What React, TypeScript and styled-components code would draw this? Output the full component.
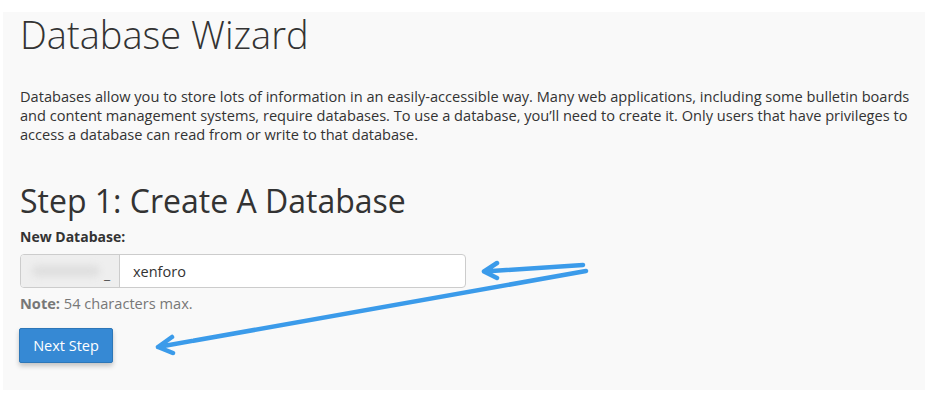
import React from "react";
import styled, { createGlobalStyle } from "styled-components";

const GlobalStyle = createGlobalStyle`
  html, body {
    margin: 0;
    padding: 0;
    background: #ffffff;
  }
  body {
    font-family: "Open Sans", "Noto Sans", sans-serif;
    color: #333333;
  }
`;

const Page = styled.div`
  padding: 12px 3px 3px 3px;
`;

const Panel = styled.div`
  position: relative;
  background: #f9f9f9;
  height: 378px;
  padding: 0 12px 0 17px;
  box-sizing: border-box;
`;

const Title = styled.h1`
  margin: 0;
  font-size: 38px;
  line-height: 44px;
  font-weight: 300;
  color: #333;
`;

const Intro = styled.p`
  margin: 31px 0 0 0;
  font-size: 14.6px;
  line-height: 19px;
  color: #333;
`;

const StepTitle = styled.h2`
  margin: 38px 0 0 0;
  font-size: 32px;
  line-height: 38px;
  font-weight: 400;
  color: #333;
`;

const Label = styled.label`
  display: block;
  margin-top: 7px;
  font-size: 14px;
  line-height: 20px;
  font-weight: 700;
  color: #333;
`;

const InputGroup = styled.div`
  display: flex;
  margin-top: 7px;
  width: 446px;
  height: 34px;
  border: 1px solid #cccccc;
  border-radius: 4px;
  box-sizing: border-box;
  overflow: hidden;
  background: #fff;
`;

const Addon = styled.div`
  display: flex;
  align-items: center;
  gap: 4px;
  width: 99px;
  flex: none;
  padding-left: 11px;
  box-sizing: border-box;
  background: #eeeeee;
  border-right: 1px solid #cccccc;
  font-size: 14px;
  color: #555;
`;

const Blurred = styled.span`
  display: inline-block;
  width: 68px;
  height: 12px;
  border-radius: 6px;
  background: #e0e0e0;
  filter: blur(3px);
`;

const Underscore = styled.span`
  padding-top: 4px;
`;

const TextInput = styled.input`
  flex: 1;
  border: 0;
  outline: none;
  padding: 0 0 0 13px;
  font-family: "Open Sans", sans-serif;
  font-size: 14.5px;
  color: #333;
  background: transparent;
`;

const Note = styled.p`
  margin: 5px 0 0 0;
  font-size: 14.6px;
  line-height: 20px;
  color: #777777;
  b {
    font-weight: 700;
  }
`;

const Button = styled.button`
  display: block;
  margin-top: 15px;
  margin-left: -1px;
  width: 94px;
  height: 35px;
  border: 1px solid #2d77b8;
  border-radius: 2px;
  background: #3689d4;
  color: #ffffff;
  font-family: "Open Sans", sans-serif;
  font-size: 14.5px;
  box-shadow: 0 3px 5px rgba(0, 0, 0, 0.22);
  cursor: pointer;
`;

const Annotations = styled.svg`
  position: absolute;
  left: 0;
  top: 0;
  pointer-events: none;
`;

const Arrows: React.FC = () => (
  <Annotations width="922" height="378" viewBox="3 12 922 378">
    <g
      fill="none"
      stroke="#3b9bea"
      strokeWidth="4.5"
      strokeLinecap="round"
      strokeLinejoin="round"
    >
      <path d="M583 265 L484 271.5 M497 263 L484 271.5 L497 278" />
      <path d="M586 271 L158 347 M172 337 L158 347 L173 353" />
    </g>
  </Annotations>
);

export default function App() {
  return (
    <>
      <GlobalStyle />
      <Page>
        <Panel>
          <Title>Database Wizard</Title>
          <Intro>
            Databases allow you to store lots of information in an easily-accessible way. Many web
            applications, including some bulletin boards and content management systems, require
            databases. To use a database, you’ll need to create it. Only users that have privileges
            to access a database can read from or write to that database.
          </Intro>
          <StepTitle>Step 1: Create A Database</StepTitle>
          <Label htmlFor="db">New Database:</Label>
          <InputGroup>
            <Addon>
              <Blurred />
              <Underscore>_</Underscore>
            </Addon>
            <TextInput id="db" defaultValue="xenforo" />
          </InputGroup>
          <Note>
            <b>Note:</b> 54 characters max.
          </Note>
          <Button>Next Step</Button>
          <Arrows />
        </Panel>
      </Page>
    </>
  );
}
